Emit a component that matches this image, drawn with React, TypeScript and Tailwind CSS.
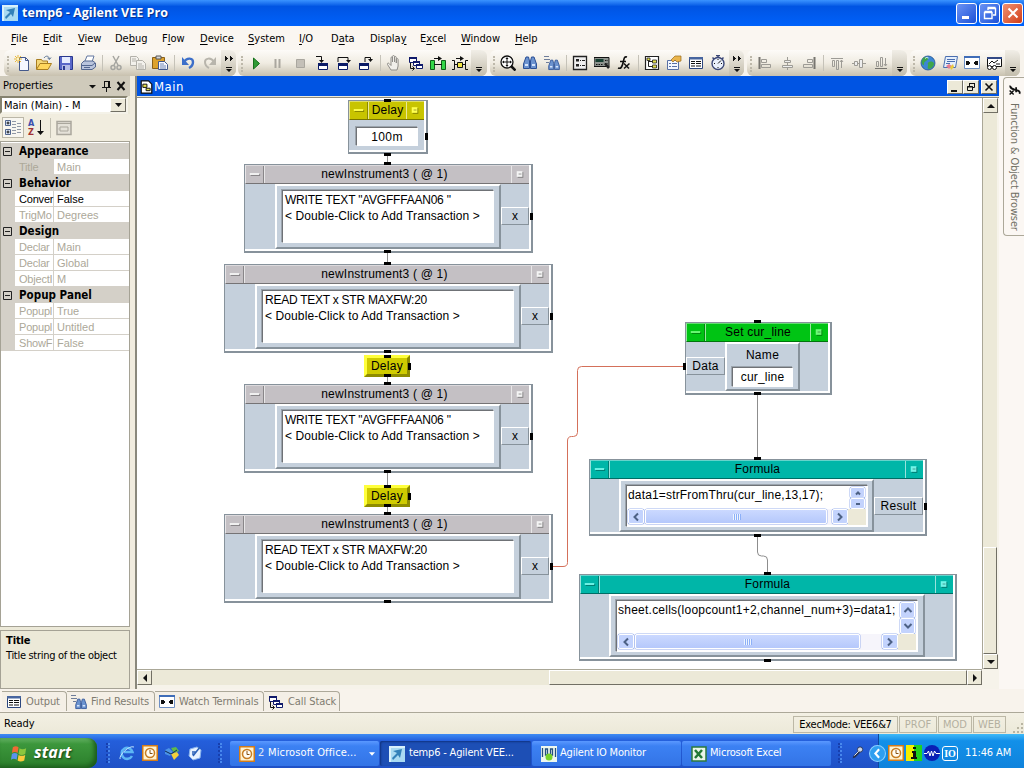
import { ReactNode } from "react";
import clsx from "clsx";

interface IconProps {
  children: ReactNode;
  className?: string;
}

function Icon({ children, className }: IconProps) {
  return (
    <svg viewBox="0 0 16 16" className={clsx("shrink-0", className ?? "w-4 h-4")} fill="none">
      {children}
    </svg>
  );
}

const NewIcon = () => (
  <Icon>
    <path d="M5.500 2.500h6l3 3v10h-9z" fill="#f4f7ff" stroke="#44598c" />
    <path d="M11.500 2.500v3h3" stroke="#44598c" />
    <path d="M4 0v8M0 4h8M1 1l6 6M7 1L1 7" stroke="#e9b93a" />
    <path d="M3 3h2v2H3z" fill="#fff6c0" />
  </Icon>
);
const OpenIcon = () => (
  <Icon>
    <path d="M.5 14V4.500h5l1 1.500h5V9" fill="#f5d878" stroke="#a87d20" />
    <path d="M.5 14.500L4 8.500h11.500L12 14.500z" fill="#ffd65c" stroke="#a87d20" />
    <path d="M8 3c2-3 5-2 5.500 1M11.500 3l2 1.500L15 2.500" stroke="#5d7595" />
  </Icon>
);
const SaveIcon = () => (
  <Icon>
    <path d="M1.500 1.500h13v13h-13z" fill="#5967c8" stroke="#29388f" />
    <path d="M4 2h8v6H4z" fill="#e6ecff" />
    <path d="M4 10h8v5H4z" fill="#b4bce6" />
    <path d="M5 11h2v4H5z" fill="#29388f" />
  </Icon>
);
const PrintIcon = () => (
  <Icon>
    <path d="M5 6l2-5h7l-2 6" fill="#fff" stroke="#6277a0" />
    <path d="M1.500 8.500L4 6h9l2.500 2v4L12 14.500H1.500z" fill="#b9c4dc" stroke="#53668f" />
    <path d="M2 10.500h10l3-2.500M4 12.500h6" stroke="#53668f" />
  </Icon>
);
const CutIcon = () => (
  <Icon>
    <path d="M5 1l5 9M11 1L6 10" stroke="#a5a5a0" strokeWidth="1.500" />
    <circle cx="5" cy="12.500" r="2" stroke="#a5a5a0" strokeWidth="1.500" />
    <circle cx="11" cy="12.500" r="2" stroke="#a5a5a0" strokeWidth="1.500" />
  </Icon>
);
const CopyIcon = () => (
  <Icon>
    <path d="M.5 1.500h6l2 2v7h-8z" fill="#f3f1ec" stroke="#b3b1aa" />
    <path d="M6.500 5.500h6l3 3v6h-9z" fill="#f3f1ec" stroke="#b3b1aa" />
    <path d="M2 4h4M2 6h4M8 9h4M8 11h6M8 13h6" stroke="#b3b1aa" />
  </Icon>
);
const PasteIcon = () => (
  <Icon>
    <path d="M.5 2.500h12v11H.5z" fill="#dda22d" stroke="#8a6119" />
    <path d="M4 1h5v3H4z" fill="#d8d8d8" stroke="#555" />
    <path d="M6.500 6.500h6l3 3v5h-9z" fill="#f6f8ff" stroke="#44598c" />
    <path d="M8 9h4M8 11h6M8 13h6" stroke="#7387b4" />
  </Icon>
);
const UndoIcon = () => (
  <Icon>
    <path d="M4 7c3-5 9-4 9 0 0 3-2 5-4 6" stroke="#3d6fc9" strokeWidth="2.400" />
    <path d="M2 2v8h7z" fill="#3d6fc9" />
  </Icon>
);
const RedoIcon = () => (
  <Icon>
    <path d="M12 7C9 2 3 3 3 7c0 3 2 5 4 6" stroke="#b8b5ac" strokeWidth="2" />
    <path d="M14 2v8H7z" fill="#b8b5ac" />
  </Icon>
);
const PlayIcon = () => (
  <Icon>
    <path d="M5.500 3v11l6-5.500z" fill="#2f9a35" stroke="#16701c" />
  </Icon>
);
const PauseIcon = () => (
  <Icon>
    <path d="M5.500 4v9M9.500 4v9" stroke="#aaa79f" strokeWidth="2" />
  </Icon>
);
const StopIcon = () => (
  <Icon>
    <path d="M4.500 4.500h8v8h-8z" fill="#c4c0b8" stroke="#aaa79f" />
  </Icon>
);
const StepIntoIcon = () => (
  <Icon>
    <path d="M2 1.500h5.500V6" stroke="#111" />
    <path d="M5 5h5L7.500 8z" fill="#111" />
    <path d="M4.500 8.500h9v6h-9z" fill="#fff" stroke="#0b1b66" />
    <path d="M4 8h10v3H4z" fill="#0b1b66" />
  </Icon>
);
const StepOverIcon = () => (
  <Icon>
    <path d="M2 7V2.500h10V6" stroke="#111" />
    <path d="M10 5h5l-2.500 3z" fill="#111" />
    <path d="M2.500 8.500h9v6h-9z" fill="#fff" stroke="#0b1b66" />
    <path d="M2 8h10v3H2z" fill="#0b1b66" />
  </Icon>
);
const StepOutIcon = () => (
  <Icon>
    <path d="M7 7V2.500h5.500V5" stroke="#111" />
    <path d="M10 4h5l-2.500 3z" fill="#111" />
    <path d="M1.500 8.500h9v6h-9z" fill="#fff" stroke="#0b1b66" />
    <path d="M1 8h10v3H1z" fill="#0b1b66" />
  </Icon>
);
const HandIcon = () => (
  <Icon>
    <path
      d="M5 15L1.500 9.500c-.5-1.500 1-2 2-.5L5 10.500V3c0-1.500 1.500-1.500 1.500 0v4V1.500c0-1.300 2-1.300 2 0V7 2.500c0-1.300 1.800-1.300 1.800 0V8 4.500c0-1.300 1.800-1.300 1.800 0V11L11 15z"
      fill="#f1efea"
      stroke="#8f8d88"
    />
  </Icon>
);
const CallStackIcon = () => (
  <Icon>
    <path d="M1.500 2.500h7v5h-7zM5.500 6.500h6v4h-6zM8.500 9.500h6v4h-6z" fill="#fff" stroke="#101a6b" />
    <path d="M1 2h8v2H1zM5 6h7v2H5zM8 9h7v2H8z" fill="#101a6b" />
    <path d="M2.500 8v5.500H6M4.500 11.500l2 2-2 2" stroke="#111" />
  </Icon>
);
const FlowLineIcon = () => (
  <Icon>
    <path d="M.5 5.500h4v9h-4zM11.500 5.500h4v9h-4z" fill="#35d748" stroke="#0f5f18" />
    <path d="M4 9.500h8M4 3.500h7" stroke="#111" />
    <path d="M8 1l4 2.500L8 6z" fill="#111" />
  </Icon>
);
const DataLineIcon = () => (
  <Icon>
    <path d="M0 5.500h2.500v9H0M16 5.500h-2.500v9H16M2.500 9.500h11M4 3.500h7" stroke="#111" />
    <path d="M8 1l4 2.500L8 6z" fill="#111" />
    <path d="M5.500 7.500h5v5h-5z" fill="#f1e544" stroke="#111" />
  </Icon>
);
const ZoomIcon = () => (
  <Icon>
    <circle cx="7" cy="7" r="6" fill="#fff" stroke="#111" strokeWidth="1.300" />
    <path d="M7 3v8M3 7h8" stroke="#111" />
    <path d="M5.500 4L7 2l1.500 2zM5.500 10L7 12l1.500-2zM4 5.500L2 7l2 1.500zM10 5.500L12 7l-2 1.500z" fill="#111" />
    <path d="M11 11l4.500 4.500" stroke="#111" strokeWidth="2.500" />
  </Icon>
);
const Binoculars = () => (
  <>
    <path d="M4 2h2.500l1 4v7.500h-6V9zM12 2H9.500l-1 4v7.500h6V9z" fill="#6c93cf" stroke="#2b4f95" />
    <path d="M3 10h3M10 10h3" stroke="#d6e4fb" strokeWidth="2" />
  </>
);
const FindIcon = () => (
  <Icon>
    <Binoculars />
  </Icon>
);
const FindResultsIcon = () => (
  <Icon>
    <path d="M0 1.500h5M0 4.500h6M2 7.500h3" stroke="#6e7d9a" />
    <g transform="translate(3.500 3.500) scale(.82)">
      <Binoculars />
    </g>
  </Icon>
);
const PropertyListIcon = () => (
  <Icon>
    <path d="M1.500 1.500h13v13h-13z" fill="#efefef" stroke="#222" strokeWidth="1.300" />
    <path d="M4 4h3v2.500H4zM4 9h3v2.500H4z" fill="#222" />
    <path d="M8 5.500h1M10 5.500h3M8 10.500h1M10 10.500h3" stroke="#222" />
  </Icon>
);
const InstrumentIcon = () => (
  <Icon>
    <path d="M0 2.500h15v9H0z" fill="#8e938e" stroke="#111" />
    <path d="M1.500 4h8v3h-8z" fill="#173e31" />
    <path d="M2 9.500h7M11 5.500h3M11 8.500h3" stroke="#111" strokeDasharray="1.500 1" />
    <path d="M10 9l4 5 2-2-4-4z" fill="#222" />
  </Icon>
);
const FxIcon = () => (
  <Icon>
    <path d="M11 2c-3-1-3 2-4 6s-2 6-5 5M4 6.500h6" stroke="#111" strokeWidth="1.700" />
    <path d="M8 8.500l5 5M13.500 8.500L8 13.500" stroke="#111" strokeWidth="1.500" />
  </Icon>
);
const ProgramIcon = () => (
  <Icon>
    <path d="M1.500 1.500h13v13h-13z" fill="#fff" stroke="#222" strokeWidth="1.200" />
    <path d="M4.500 4v7.500H9M4.500 6.500H9" stroke="#222" />
    <path d="M3 3h3v2.500H3zM8.500 5h4v3h-4zM8.500 10h4v3h-4z" fill="#e5e04b" stroke="#222" strokeWidth=".8" />
  </Icon>
);
const PropertiesIcon = () => (
  <Icon>
    <path d="M1.500 5.500h11v9h-11z" fill="#f4f8ff" stroke="#5870a5" />
    <path d="M3 8.500h2M6 8.500h5M3 11.500h2M6 11.500h5" stroke="#5870a5" />
    <path d="M5 5l4-4h6v5l-4 1-2-2-2 2z" fill="#eab54c" stroke="#9a6a1e" strokeWidth=".7" />
  </Icon>
);
const OutputIcon = () => (
  <Icon>
    <path d="M1.500 2.500h13v11h-13z" fill="#fff" stroke="#2c467e" />
    <path d="M1 2h14v2.500H1z" fill="#47659f" />
    <path d="M3 6.500h4M8 6.500h5M3 8.500h4M8 8.500h5M3 11h4M8 11h5" stroke="#111" />
  </Icon>
);
const TimerIcon = () => (
  <Icon>
    <path d="M6 .5h4M8 0v3M2.500 2.500l2 2M13.500 2.500l-2 2" stroke="#3b4777" strokeWidth="1.500" />
    <circle cx="8" cy="8.500" r="6" fill="#eaf0fb" stroke="#3b4777" strokeWidth="1.400" />
    <path d="M8 8.500l3-3M4 8.500h1M11 8.500h1M8 4v1M8 12v1" stroke="#111" />
  </Icon>
);

const AlignLeftIcon = () => (
  <Icon>
    <path d="M2.500 2v12" stroke="#77756f" strokeWidth="2" />
    <path d="M4.500 4.500h5v3h-5zM4.500 9.500h9v3h-9z" stroke="#9d9b95" />
  </Icon>
);
const AlignCenterIcon = () => (
  <Icon>
    <path d="M8.500 2v13" stroke="#9d9b95" />
    <path d="M5.500 5.500h6v2h-6zM3.500 10.500h10v2h-10z" fill="#eee" stroke="#9d9b95" />
  </Icon>
);
const AlignRightIcon = () => (
  <Icon>
    <path d="M13.500 2v12" stroke="#77756f" strokeWidth="2" />
    <path d="M6.500 4.500h5v3h-5zM2.500 9.500h9v3h-9z" stroke="#9d9b95" />
  </Icon>
);
const AlignTopIcon = () => (
  <Icon>
    <path d="M2 3.500h12" stroke="#9d9b95" />
    <path d="M3.500 5.500h2v6h-2zM7.500 5.500h2v9h-2zM12.500 5v8M11 7l1.500-2L14 7" stroke="#9d9b95" />
  </Icon>
);
const AlignMiddleIcon = () => (
  <Icon>
    <path d="M1 8.500h14" stroke="#9d9b95" />
    <path d="M3.500 6.500h3v4h-3zM8.500 4.500h3v8h-3z" fill="#eee" stroke="#9d9b95" />
  </Icon>
);
const AlignBottomIcon = () => (
  <Icon>
    <path d="M2 13.500h12" stroke="#77756f" />
    <path d="M3.500 6.500h2v5h-2zM7.500 2.500h2v9h-2zM12.500 3v8M11 9l1.500 2L14 9" stroke="#9d9b95" />
  </Icon>
);
const GlobeIcon = () => (
  <Icon>
    <circle cx="8" cy="8" r="7" fill="#3c86d4" stroke="#23528e" strokeWidth=".8" />
    <path d="M3 3c3-2 6-1 5 1S4 6 4 9 2 9 1.500 7zM9 7c3-1 5 0 5 2s-3 5-5 5-1-3-1-4-1-2 1-3z" fill="#3fa54a" />
    <path d="M5 3.500c2-2 4-1 3 0" stroke="#d5ecff" />
  </Icon>
);
const BrowserIcon = () => (
  <Icon>
    <path d="M3.500 1.500h12l-2 11h-12z" fill="#e5effc" stroke="#4a6eb0" />
    <path d="M5 4.500h8M5 6.500h8M4 8.500h4" stroke="#4a6eb0" />
    <path d="M4 11l3-2 3 2-3 3z" fill="#e77d92" />
    <path d="M8 12l3-3 1 3-3 3z" fill="#e9c83e" />
  </Icon>
);
const WatchIcon = () => (
  <Icon>
    <path d="M.5 1.500h15v12H.5z" fill="#fff" stroke="#6d8fc4" />
    <path d="M0 1h16v2H0z" fill="#3f6db8" />
    <path d="M2 6h3v1h1v2H5v1H2zM14 6h-3v1h-1v2h1v1h3z" fill="#111" />
  </Icon>
);
const WatchExprIcon = () => (
  <Icon>
    <path d="M1.500 2.500h14v9h-14z" fill="#fff" stroke="#111" />
    <path d="M1 2h15v2H1z" fill="#334a86" />
    <path d="M3 9l3-3 2 2 4-3M10 9h4" stroke="#111" />
    <circle cx="3.500" cy="12.500" r="2" fill="#fff" stroke="#111" />
    <circle cx="8.500" cy="12.500" r="2" fill="#fff" stroke="#111" />
  </Icon>
);

function VeeIcon() {
  return (
    <Icon>
      <path d="M0 0h16v16H0z" fill="#a9daf2" />
      <path d="M0 0h16v2H0zM0 0h2v16H0z" fill="#d9f1fb" />
      <path d="M3 12l5-5-4-2 9-2-2 9-2-3-5 5z" fill="#3381b9" />
    </Icon>
  );
}

function OutlookIcon() {
  return (
    <Icon>
      <path d="M.5.5h15v15H.5z" fill="#fff3cf" stroke="#d37c19" strokeWidth="2" />
      <circle cx="8" cy="8" r="4.500" fill="#fffdf4" stroke="#c77d23" strokeWidth="1.500" />
      <path d="M8 5v3.500h2.500" stroke="#865013" />
    </Icon>
  );
}

const SEPARATOR = null;

function Toolbar({ items, more, className }: { items: (ReactNode | null)[]; more?: boolean; className: string }) {
  return (
    <div
      className={clsx(
        "flex h-[26px] shrink-0 overflow-hidden rounded-md bg-linear-to-b from-[#fdfbf8] via-[#f0ece2] to-[#c8c1af]",
        className,
      )}
    >
      <div className="w-[7px] h-4 mt-[6px] shrink-0">
        <div className="ml-[3px] h-full border-l-2 border-dotted border-[#bdb8aa]" />
      </div>
      {items.map((item, i) =>
        item === SEPARATOR ? (
          <div key={i} className="w-[6px] shrink-0 flex justify-center pt-[5px]">
            <div className="w-px h-4 bg-[#c5c2b8]" />
          </div>
        ) : (
          <div key={i} className="w-[22px] shrink-0 flex justify-center pt-[5px]">
            {item}
          </div>
        ),
      )}
      <div className="flex-1 bg-linear-to-b from-[#f1eee7] to-[#c3bdac] flex justify-center">
        <svg viewBox="0 0 10 26" className="w-[10px] h-[26px]">
          {more && <path d="M1 6h1v1h1v1h1v1H3v1H2v1H1zM6 6h1v1h1v1h1v1H8v1H7v1H6z" fill="#111" />}
          <path d="M2 17h6v1H2zM2 19h6l-3 3z" fill="#111" />
        </svg>
      </div>
    </div>
  );
}

const MENU = [
  { before: "", key: "F", after: "ile", width: "w-8" },
  { before: "", key: "E", after: "dit", width: "w-[35px]" },
  { before: "", key: "V", after: "iew", width: "w-[37px]" },
  { before: "De", key: "b", after: "ug", width: "w-[47px]" },
  { before: "F", key: "l", after: "ow", width: "w-[38px]" },
  { before: "", key: "D", after: "evice", width: "w-12" },
  { before: "", key: "S", after: "ystem", width: "w-[51px]" },
  { before: "", key: "I", after: "/O", width: "w-8" },
  { before: "D", key: "a", after: "ta", width: "w-[39px]" },
  { before: "Displa", key: "y", after: "", width: "w-[50px]" },
  { before: "E", key: "x", after: "cel", width: "w-[41px]" },
  { before: "", key: "W", after: "indow", width: "w-[54px]" },
  { before: "", key: "H", after: "elp", width: "w-10" },
];

function TitleBar() {
  const button = "w-[21px] h-[21px] rounded-[3px] border border-white flex items-center justify-center";
  return (
    <header className="h-[26px] shrink-0 flex items-center pl-[2px] pr-px bg-linear-to-b from-[#3a93ff] via-[#0054e3] via-25% to-[#0062fb]">
      <VeeIcon />
      <h1 className="flex-1 pl-1 pt-px font-['Open_Sans',sans-serif] [font-stretch:normal] font-bold text-[12.5px] tracking-[0.05px] text-white [text-shadow:1px_1px_1px_#0a2c86] whitespace-pre">
        temp6 - Agilent VEE Pro
      </h1>
      <div className="flex gap-[2px]">
        <div className={clsx(button, "bg-linear-to-br from-[#6c93f4] to-[#1b4fd6]")}>
          <Icon>
            <path d="M3 11h7v3H3z" fill="#fff" />
          </Icon>
        </div>
        <div className={clsx(button, "bg-linear-to-br from-[#6c93f4] to-[#1b4fd6]")}>
          <Icon>
            <path d="M6 5V3.500h7.500V10H11M5.500 2.500h8" stroke="#fff" strokeWidth="1.400" />
            <path d="M2.500 7.500h7.500v6H2.500zM2.500 6.500H10" stroke="#fff" strokeWidth="1.400" />
          </Icon>
        </div>
        <div className={clsx(button, "bg-linear-to-br from-[#f0906f] to-[#d03a10]")}>
          <Icon>
            <path d="M3.500 3.500l9 9M12.500 3.500l-9 9" stroke="#fff" strokeWidth="2" />
          </Icon>
        </div>
      </div>
    </header>
  );
}

const PROPERTIES = [
  { group: "Appearance", rows: [["Title", "Main"]] },
  { group: "Behavior", rows: [["Conver", "False"], ["TrigMo", "Degrees"]] },
  { group: "Design", rows: [["Declar", "Main"], ["Declar", "Global"], ["ObjectI", "M"]] },
  { group: "Popup Panel", rows: [["Popupl", "True"], ["Popupl", "Untitled"], ["ShowF", "False"]] },
];

function PropertiesPanel() {
  return (
    <aside className="w-[130px] shrink-0 flex flex-col bg-[#ece9d8]">
      <div className="h-[20px] shrink-0 flex items-center pl-[3px] bg-[#cfcabb]">
        <span className="flex-1">Properties</span>
        <svg viewBox="0 0 44 16" className="w-11 h-4" fill="none">
          <path d="M3 7h7L6.500 10.500z" fill="#111" />
          <path d="M18.500 3v6M23.500 3v6M18 3.500h6M16 9.500h9M20.500 10v4M22.500 3v6" stroke="#111" />
          <path d="M31.500 4l7 8M38.500 4l-7 8" stroke="#111" strokeWidth="2" />
        </svg>
      </div>
      <div className="h-[18px] shrink-0 flex mr-[2px] border-2 border-t-[#85826f] border-l-[#85826f] border-r-[#f4f2e8] border-b-[#f4f2e8] bg-white">
        <span className="flex-1 pl-[2px] leading-[15px] whitespace-pre">Main (Main) - M</span>
        <div className="w-4 bg-[#ece9d8] border border-t-white border-l-white border-r-[#716f64] border-b-[#716f64] flex items-center justify-center">
          <svg viewBox="0 0 7 4" className="w-[7px] h-1">
            <path d="M0 0h7L3.500 4z" fill="#111" />
          </svg>
        </div>
      </div>
      <div className="h-[27px] shrink-0 flex items-center bg-[#f1eddf]">
        <div className="ml-[2px] w-[22px] h-[21px] border border-[#bbb7a8] bg-[#f8f6f0] flex items-center justify-center">
          <svg viewBox="0 0 18 17" className="w-[18px] h-[17px]" fill="none">
            <path d="M1.500 1.500h5v5h-5zM1.500 10.500h5v5h-5z" fill="#dce7fa" stroke="#50658e" />
            <path d="M2.500 4h3M4 2.500v3M2.500 13h3M4 11.500v3" stroke="#111" />
            <path d="M8 2.500h4M8 5.500h4M8 8.500h4M8 11.500h4M8 14.500h4M13 4.500h4M13 7.500h4M13 10.500h4M13 13.500h4" stroke="#9198a6" />
          </svg>
        </div>
        <div className="w-[24px] h-[19px] flex pl-1">
          <div className="w-2 font-bold text-[9px] leading-[9px] pt-px">
            <div className="text-[#3c4fae]">A</div>
            <div className="text-[#a03232]">Z</div>
          </div>
          <svg viewBox="0 0 7 17" className="w-[7px] h-[17px] ml-px mt-px">
            <path d="M3 1h1v11h3l-3.500 4L0 12h3z" fill="#111" />
          </svg>
        </div>
        <div className="w-px h-5 ml-[2px] mr-[5px] bg-[#c5c2b4]" />
        <Icon className="w-4 h-4">
          <path d="M1 1.500h14v13H1z" fill="#e4e1d8" stroke="#aaa79d" strokeWidth="1.500" />
          <path d="M1 3.500h14M4 7h8v4H4zM2.500 9h1" stroke="#aaa79d" />
        </Icon>
      </div>
      <div className="h-[486px] shrink-0 border border-[#a5a295] bg-white pt-px">
        {PROPERTIES.map(({ group, rows }) => (
          <section key={group} className="bg-[#d4d0c8]">
            <h2 className="h-4 flex items-center font-bold text-[11.500px] tracking-[0.02px]">
              <svg viewBox="0 0 9 9" className="w-[9px] h-[9px] ml-[2px] mr-[7px]" fill="none">
                <path d="M.5.5h8v8h-8zM2 4.500h5" stroke="#222" />
              </svg>
              <span className="pt-[2px]">{group}</span>
            </h2>
            {rows.map(([name, value], i) => (
              <div
                key={i}
                className={clsx(
                  "h-4 ml-[14px] flex border-b border-[#d4d0c8] bg-white leading-[16px] font-['Liberation_Sans',sans-serif] text-[11px]",
                  name === "Conver" ? "text-black" : "text-[#aca899]",
                )}
              >
                <div
                  className={clsx(
                    "w-[39px] shrink-0 pl-1 whitespace-nowrap tracking-[-0.2px] border-r border-[#d4d0c8]",
                    name === "Title" && "bg-[#d4d0c8]",
                  )}
                >
                  {name}
                </div>
                <div className="pl-[3px]">{value}</div>
              </div>
            ))}
          </section>
        ))}
      </div>
      <div className="mt-[3px] h-[59px] border border-[#a5a295] px-[5px] pt-[2px] leading-[15px]">
        <div className="font-bold tracking-[-0.1px]">Title</div>
        <div className="whitespace-nowrap tracking-[-0.3px]">Title string of the object</div>
      </div>
    </aside>
  );
}

interface NodeProps {
  title: string;
  className: string;
  bar?: string;
  ink?: string;
  children: ReactNode;
}

// Open view of a VEE object: coloured title strip above a row of terminals and body.
function ObjectView({ title, className, bar = "bg-[#c4c0c4]", ink = "#f4f4f4", children }: NodeProps) {
  return (
    <div className={clsx("absolute flex flex-col border border-[#87929b] border-r-2 border-b-2 bg-white", className)}>
      <div
        className={clsx("h-[19px] mr-[2px] shrink-0 flex border-t border-l border-b border-t-white/40 border-l-white/60 border-b-black/40", bar)}
      >
        <svg viewBox="0 0 18 17" className="w-[18px] h-[17px] shrink-0 border-r border-black/30">
          <path d="M5 8h10v2H5z" fill="#0005" />
          <path d="M4 7h10v2H4z" fill={ink} />
        </svg>
        <div className="flex-1 border-l border-white/60 text-center text-[12px] leading-[16px] tracking-[0.2px] whitespace-pre">{title}</div>
        <svg viewBox="0 0 18 17" className="w-[18px] h-[17px] shrink-0 border-l border-white/60">
          <path d="M6 6h6v6H6z" fill="#0005" />
          <path d="M5 5h6v6H5z" fill={ink} />
          <path d="M7 7h3v2H7z" fill="#0003" />
        </svg>
      </div>
      <div className="flex-1 min-h-0 flex mr-[2px] mb-[2px] bg-[#c5d0dc]">{children}</div>
    </div>
  );
}

function Body({ className, children }: { className?: string; children: ReactNode }) {
  return (
    <div className={clsx("border-2 border-t-white border-l-white border-r-[#87929b] border-b-[#87929b] bg-[#c5d0dc] flex flex-col", className)}>
      {children}
    </div>
  );
}

const FIELD = "border border-t-[#6f7276] border-l-[#6f7276] border-r-white border-b-white p-px bg-white shadow-[-1px_-1px_0_#9ba4ad]";

function Terminal({ className, children }: { className: string; children: ReactNode }) {
  return (
    <div
      className={clsx(
        "h-[18px] shrink-0 border border-t-white border-l-white border-r-[#87929b] border-b-[#87929b] text-center text-[12px] leading-[16px]",
        className,
      )}
    >
      {children}
    </div>
  );
}

function Instrument({ className, transaction, read }: { className: string; transaction: string; read?: boolean }) {
  return (
    <ObjectView title="newInstrument3 ( @ 1)  " className={clsx("h-[89px]", read ? "w-[329px]" : "w-[289px]", className)}>
      <div className="w-[30px] shrink-0" />
      <Body className="flex-1 p-[5px] pt-1 pb-1">
        <div className={clsx(FIELD, "flex-1 pl-[2px] text-[12px] leading-4 whitespace-pre")}>
          <div className={read ? "tracking-[-0.25px]" : "tracking-[-0.22px]"}>{transaction}</div>
          <div className="tracking-[0.1px]">&lt; Double-Click to Add Transaction &gt;</div>
        </div>
      </Body>
      <Terminal className="w-7 mt-[23px]">x</Terminal>
    </ObjectView>
  );
}

function DelayIcon({ className }: { className: string }) {
  return (
    <div
      className={clsx(
        "absolute left-[227px] w-[46px] h-[22px] border-[3px] border-t-[#ffff3c] border-l-[#ffff3c] border-r-[#8e8c00] border-b-[#8e8c00] bg-[#cfcb00] text-center text-[12px] leading-[16px] tracking-[0.3px]",
        className,
      )}
    >
      Delay
    </div>
  );
}

function LunaButton({ path, className }: { path: string; className: string }) {
  return (
    <div className={clsx("shrink-0 rounded-[2px] border border-white bg-[#c3d3fd] shadow-[0_0_0_0.5px_#9db4ee] flex items-center justify-center", className)}>
      <svg viewBox="0 0 10 10" className="w-[10px] h-[10px]" fill="none">
        <path d={path} stroke="#4d6185" strokeWidth="2" />
      </svg>
    </div>
  );
}

function FormulaField({ text, thumb, small }: { text: string; thumb: string; small?: boolean }) {
  return (
    <div className={clsx(FIELD, "flex-1 min-h-0 flex flex-col")}>
      <div className="flex-1 flex min-h-0 justify-between">
        <div
          className={clsx(
            "text-[12px] leading-[16px] whitespace-pre",
            small ? "tracking-[0.16px]" : "tracking-[0.24px]",
          )}
        >
          {text}
        </div>
        <div className="flex flex-col shrink-0 pr-px">
          {small ? (
            <>
              <LunaButton className="w-[15px] h-[11px]" path="M3 6.500l2-2 2 2" />
              <LunaButton className="w-[15px] h-[11px]" path="M3 5h4" />
            </>
          ) : (
            <>
              <LunaButton className="w-[15px] h-4" path="M1.500 7L5 3.500 8.500 7" />
              <LunaButton className="w-[15px] h-4" path="M1.500 3L5 6.500 8.500 3" />
            </>
          )}
        </div>
      </div>
      <div className="h-4 shrink-0 flex bg-[#f6f5fb]">
        <LunaButton className="w-4 h-[15px]" path="M7 1.500L3.500 5 7 8.500" />
        <div
          className={clsx(
            "h-[15px] ml-px rounded-[2px] border border-white bg-linear-to-b from-[#cbd9ff] to-[#b5c8fb] shadow-[0_0_0_0.5px_#9db4ee] flex items-center justify-center gap-px",
            thumb,
          )}
        >
          {[0, 1, 2, 3].map((n) => (
            <div key={n} className="w-px h-[6px] bg-[#eef4fe] shadow-[1px_0_0_#8cb0f8]" />
          ))}
        </div>
        <div className="flex-1" />
        <LunaButton className="w-4 h-[15px]" path="M3 1.500L6.500 5 3 8.500" />
        <div className="w-[18px] bg-[#ece9d8]" />
      </div>
    </div>
  );
}

// Sequence pins sit on the top and bottom edges, data pins on the sides.
const SEQUENCE_PINS = [
  [387, 100], [387, 154], [387, 163], [387, 251], [387, 263], [387, 351], [387, 356], [387, 375],
  [387, 383], [387, 471], [387, 486], [387, 505], [387, 513], [387, 601],
  [757, 321], [757, 393], [757, 458], [757, 535], [767, 573], [767, 660],
];
const DATA_PINS = [
  [426, 136], [531, 216], [551, 316], [409, 366], [531, 436], [409, 496], [551, 566], [684, 366], [925, 506],
];

function Wires() {
  return (
    <svg viewBox="137 98 845 571" className="absolute left-0 top-0 w-[845px] h-[571px]" fill="none">
      <path
        d="M387.500 155v8M387.500 252v11M387.500 376v7M387.500 472v14M387.500 506v7M757.500 394v64M757.500 536v16q0 4 4 4h2q4 0 4 4v13"
        stroke="#8d8d8d"
      />
      <path d="M552 566.500h11q4.500 0 4.500-4V441q0-4.500 4-4.500h2q4 0 4-4V370.500q0-4 4-4h102.500" stroke="#d4705a" />
      {SEQUENCE_PINS.map(([x, y]) => (
        <rect key={`${x}-${y}`} x={x - 3} y={y - 1} width="7" height="3" fill="#000" />
      ))}
      {DATA_PINS.map(([x, y]) => (
        <rect key={`${x}-${y}`} x={x - 1} y={y - 3} width="3" height="7" fill="#000" />
      ))}
    </svg>
  );
}

function Workspace() {
  return (
    <div className="relative flex-1 overflow-hidden bg-white font-['Liberation_Sans',sans-serif]">
      <ObjectView title="Delay" bar="bg-[#c8c400]" ink="#ffff50" className="left-[211px] top-[2px] w-[80px] h-[54px]">
        <div className="flex-1 p-[6px] pl-[7px] pt-[7px]">
          <div className={clsx(FIELD, "h-[19px] text-center text-[12px] leading-[16px] tracking-[0.4px]")}>100m</div>
        </div>
      </ObjectView>
      <Instrument className="left-[107px] top-[66px]" transaction={'WRITE TEXT "AVGFFFAAN06 "'} />
      <Instrument className="left-[87px] top-[166px]" transaction="READ TEXT x STR MAXFW:20" read />
      <DelayIcon className="top-[257px]" />
      <Instrument className="left-[107px] top-[286px]" transaction={'WRITE TEXT "AVGFFFAAN06 "'} />
      <DelayIcon className="top-[387px]" />
      <Instrument className="left-[87px] top-[416px]" transaction="READ TEXT x STR MAXFW:20" read />

      <ObjectView title="Set cur_line" bar="bg-[#00c414]" ink="#6dfa78" className="left-[548px] top-[224px] w-[147px] h-[73px]">
        <Terminal className="w-[39px] mt-[15px] tracking-[0.3px]">Data</Terminal>
        <Body className="w-[75px] px-[5px]">
          <div className="h-[23px] text-center text-[12px] leading-[22px] tracking-[0.3px]">Name</div>
          <div className={clsx(FIELD, "h-[20px] text-center text-[12px] leading-[16px] tracking-[0.2px]")}>cur_line</div>
        </Body>
      </ObjectView>

      <ObjectView title="Formula" bar="bg-[#00b6a8]" ink="#72f4e8" className="left-[452px] top-[361px] w-[338px] h-[77px]">
        <div className="w-[29px] shrink-0" />
        <Body className="flex-1 pl-[5px] pr-1 pt-1 pb-[3px]">
          <FormulaField text="data1=strFromThru(cur_line,13,17);" thumb="w-[182px]" small />
        </Body>
        <Terminal className="w-[49px] mt-[18px] tracking-[0.3px]">Result</Terminal>
      </ObjectView>

      <ObjectView title="Formula" bar="bg-[#00b6a8]" ink="#72f4e8" className="left-[442px] top-[476px] w-[378px] h-[87px]">
        <div className="w-[29px] shrink-0" />
        <Body className="flex-1 px-[5px] pt-1 pb-[3px]">
          <FormulaField text="sheet.cells(loopcount1+2,channel_num+3)=data1;" thumb="w-[225px]" />
        </Body>
        <div className="w-[28px] shrink-0" />
      </ObjectView>
      <Wires />
    </div>
  );
}

const RAISED = "border border-t-white border-l-white border-r-[#716f64] border-b-[#716f64] bg-[#ece9d8]";

function ScrollArrow({ path }: { path: string }) {
  return (
    <div className={clsx(RAISED, "w-[15px] h-[15px] shrink-0 flex items-center justify-center")}>
      <svg viewBox="0 0 8 8" className="w-2 h-2">
        <path d={path} fill="#111" />
      </svg>
    </div>
  );
}

function MainWindow() {
  const button = clsx(RAISED, "w-4 h-[14px] flex items-center justify-center");
  return (
    <main className="w-[864px] shrink-0 flex flex-col border-l-2 border-[#8a887c]">
      <div className="h-[20px] shrink-0 flex items-center pl-[3px] pr-[2px] pt-px bg-[#0054e3]">
        <Icon className="w-[13px] h-[14px]">
          <path d="M1.500.5h9l4 4v11h-13z" fill="#fff" stroke="#111" strokeWidth="1.500" />
          <path d="M3.500 4.500h5v4h-5zM7.500 9.500h5v3h-5z" fill="#e5e04b" stroke="#111" strokeWidth="1.200" />
        </Icon>
        <span className="flex-1 pl-px text-white text-[13px] tracking-[0.5px]">Main</span>
        <div className={button}>
          <svg viewBox="0 0 10 10" className="w-[10px] h-[10px]">
            <path d="M1 8h6v2H1z" fill="#111" />
          </svg>
        </div>
        <div className={clsx(button, "mr-[2px]")}>
          <svg viewBox="0 0 10 10" className="w-[10px] h-[10px]" fill="none">
            <path d="M3.500 4V1.500h5v4H7M3 1.500h6M1.500 4.500h5v4h-5zM1 5h6" stroke="#111" />
          </svg>
        </div>
        <div className={button}>
          <svg viewBox="0 0 10 10" className="w-[10px] h-[10px]">
            <path d="M1.500 1.500l7 7M8.500 1.500l-7 7" stroke="#111" strokeWidth="1.600" />
          </svg>
        </div>
      </div>
      <div className="h-[2px] shrink-0 bg-[#8f8c7e] border-t border-[#ece9d8]" />
      <div className="h-[571px] shrink-0 flex">
        <Workspace />
        <div className="w-[15px] mr-[2px] flex flex-col bg-[#ece9d8] border-l border-[#aaa797]">
          <ScrollArrow path="M0 6h8L4 2z" />
          <div className="flex-1" />
          <div className={clsx(RAISED, "h-[107px]")} />
          <ScrollArrow path="M0 2h8L4 6z" />
        </div>
      </div>
      <div className="h-[16px] shrink-0 mr-[17px] flex bg-[#ece9d8] border-t border-[#aaa797]">
        <ScrollArrow path="M6 0v8L2 4z" />
        <div className="flex-1" />
        <div className={clsx(RAISED, "w-[418px]")} />
        <ScrollArrow path="M2 0v8l4-4z" />
      </div>
      <div className="flex-1 bg-[#f6f3ea]" />
    </main>
  );
}

function BottomTab({ icon, label, className }: { icon: ReactNode; label: string; className: string }) {
  return (
    <div className={clsx("flex items-center gap-[4px] pl-1 border border-l-0 border-b-0 border-[#aca899] rounded-tr bg-[#f4efe6] text-[#7f7b70]", className)}>
      {icon}
      <span className="pt-px whitespace-nowrap tracking-[-0.08px]">{label}</span>
    </div>
  );
}

function StatusCell({ className, children }: { className: string; children: ReactNode }) {
  return <div className={clsx("h-[17px] border border-[#bcb8a6] text-center leading-[16px] whitespace-nowrap", className)}>{children}</div>;
}

function TaskButton({ icon, className, children }: { icon: ReactNode; className?: string; children: ReactNode }) {
  return (
    <div
      className={clsx(
        "h-[25px] shrink-0 rounded-[2px] flex items-center pl-[9px] gap-[3px] whitespace-pre text-white tracking-[-0.2px]",
        className ?? "w-[149px] bg-linear-to-b from-[#5a98ff] via-[#3c81f3] via-20% to-[#3374e6]",
      )}
    >
      {icon}
      {children}
    </div>
  );
}

function Grip({ className }: { className: string }) {
  return <div className={clsx("h-5 w-1 shrink-0 border-l-2 border-r-2 border-dotted border-l-[#173fae] border-r-[#4888ee]", className)} />;
}

function Taskbar() {
  return (
    <footer className="h-[34px] shrink-0 flex bg-linear-to-b from-[#3f8cf3] via-[#245edb] via-20% to-[#1f51c6] text-white">
      <div className="mt-[4px] w-[97px] shrink-0 flex items-center pl-[10px] rounded-r-[9px] bg-linear-to-b from-[#63b263] via-[#3c973c] via-20% to-[#2b7e2b] shadow-[inset_-3px_-2px_4px_#1c5c1c]">
        <svg viewBox="0 0 20 18" className="w-[19px] h-[18px]">
          <path d="M3 3q3-2 6 0L8 9q-3-2-6 0z" fill="#ef6a35" />
          <path d="M10 4q3 2 7 0l-1 6q-4 2-7 0z" fill="#8cc63e" />
          <path d="M2 10q3-2 6 0l-1 6q-3-2-6 0z" fill="#5a93ee" />
          <path d="M9 11q3 2 7 0l-1 6q-4 2-7 0z" fill="#fcc93c" />
        </svg>
        <span className="pl-[5px] pb-[2px] font-['Open_Sans',sans-serif] [font-stretch:normal] italic font-bold text-[16px] tracking-[0.1px] [text-shadow:1px_1px_2px_#143f14]">
          start
        </span>
      </div>
      <div className="flex items-center pt-[3px] w-[133px] shrink-0">
        <Grip className="ml-[9px] mr-[9px]" />
        <Icon>
          <path d="M13 11a5.500 5.500 0 1 1 .5-4H5" stroke="#5db6f5" strokeWidth="2.500" />
          <path d="M1 14C0 10 10 0 15 2" stroke="#bfe5ff" />
        </Icon>
        <div className="w-[7px]" />
        <OutlookIcon />
        <div className="w-[6px]" />
        <Icon>
          <path d="M1 5l4-2 4 4-3 4-5-2z" fill="#4b94e8" />
          <path d="M7 3l5-1 3 4-5 2z" fill="#5fba4b" />
          <path d="M7 9l6-2 2 3-5 5z" fill="#f0d03c" />
          <path d="M1 6l6 3 6-4" stroke="#0f2b52" />
        </Icon>
        <div className="w-[7px]" />
        <Icon>
          <path d="M3 4l7-2 4 3-1 8-7 2-4-4z" fill="#e8f2ff" stroke="#88b3ee" />
          <path d="M6 11l7-9M5 7h4M5 9h2" stroke="#2b61b7" strokeWidth="1.500" />
        </Icon>
        <Grip className="ml-[15px]" />
      </div>
      <div className="flex items-start gap-px pt-[7px] flex-1">
        <TaskButton icon={<OutlookIcon />}>
          <span className="text-[#dfe6f5]">2</span>
          <span className="pl-px tracking-[0.1px]">Microsoft Office...</span>
          <svg viewBox="0 0 7 4" className="w-[6px] h-1 ml-[9px]">
            <path d="M0 0h7L3.500 4z" fill="#fff" />
          </svg>
        </TaskButton>
        <TaskButton className="w-[151px] bg-[#1d4fb5] shadow-[inset_1px_1px_2px_#0f3380]" icon={<VeeIcon />}>
          <span className="pl-px tracking-[-0.18px]">temp6 - Agilent VEE...</span>
        </TaskButton>
        <TaskButton
          icon={
            <Icon>
              <path d="M0 0h16v16H0z" fill="#eef7ee" />
              <path d="M1.500 2v9M4.500 3h2v6h-2zM9.500 3h2v6h-2zM14.500 2v9" stroke="#245080" strokeWidth="1.300" />
              <circle cx="8" cy="11" r="3.500" fill="#77d32c" />
            </Icon>
          }
        >
          <span>Agilent IO Monitor</span>
        </TaskButton>
        <TaskButton
          icon={
            <Icon>
              <path d="M1 1h14v14H1z" fill="#e9f5e9" stroke="#2c7a3c" strokeWidth="1.500" />
              <path d="M4 4l7 8M11 4l-7 8" stroke="#237a35" strokeWidth="2.500" />
            </Icon>
          }
        >
          <span>Microsoft Excel</span>
        </TaskButton>
      </div>
      <div className="w-[47px] shrink-0 flex items-center pt-[3px]">
        <Grip className="ml-[7px] mr-[8px]" />
        <Icon className="w-[14px] h-4">
          <path d="M3 14l1-3 6-6 2 2-6 6z" fill="#26314f" />
          <circle cx="11.500" cy="4" r="3" fill="#cfd7e6" stroke="#26314f" />
          <path d="M5 11l5-5" stroke="#fff" />
        </Icon>
      </div>
      <div className="w-[146px] shrink-0 flex items-center pt-[4px] bg-linear-to-b from-[#3fbaf8] via-[#1290e9] via-20% to-[#0f83dc] border-l border-[#0c4a9e]">
        <Icon className="-ml-[10px] w-[17px] h-[17px]">
          <circle cx="8" cy="8" r="7.500" fill="#2f9ff0" stroke="#8bd0ff" />
          <path d="M9.500 4L6 8l3.500 4" stroke="#fff" strokeWidth="2" />
        </Icon>
        <div className="w-[2px]" />
        <OutlookIcon />
        <svg viewBox="0 0 16 16" className="w-[16px] h-4 ml-[2px] shrink-0">
          <path d="M0 0h8v16H0z" fill="#f4f000" />
          <path d="M8 0h8v16H8z" fill="#1fd31f" />
          <path d="M7 2h3v2H7zM6 6h4v6h1v2H5v-2h2V8H6z" fill="#111" />
        </svg>
        <svg viewBox="0 0 16 16" className="w-4 h-4 ml-[2px] shrink-0" fill="none">
          <circle cx="8" cy="8" r="8" fill="#0a1fb5" />
          <path d="M0 8.500h3L4.500 6 6 11l1.500-5L9 11l1.500-5L12 8.500h4" stroke="#fff" />
        </svg>
        <div className="ml-[2px] w-4 h-[15px] shrink-0 rounded-[3px] border border-white flex items-center justify-center font-['Liberation_Serif',serif] font-bold text-[10px] leading-[11px]">
          IO
        </div>
        <span className="ml-[7px] whitespace-nowrap tracking-[-0.1px]">11:46 AM</span>
      </div>
    </footer>
  );
}

export default function App() {
  return (
    <div className="w-[1024px] h-[768px] overflow-hidden flex flex-col bg-[#f6f3ea] text-black font-['DejaVu_Sans_Condensed','DejaVu_Sans',sans-serif] [font-stretch:condensed] text-[11px]">
      <TitleBar />
      <nav className="h-[24px] shrink-0 flex items-center pl-[11px] pt-[2px] bg-[#faf6f1]">
        {MENU.map(({ before, key, after, width }) => (
          <span key={before + key + after} className={clsx("shrink-0 whitespace-nowrap", width)}>
            {before}
            <span className="underline underline-offset-2">{key}</span>
            {after}
          </span>
        ))}
      </nav>
      <div className="h-[26px] shrink-0 flex pl-1 bg-[#f7f3ec]">
        <Toolbar
          className="w-[232px] mr-[2px]"
          more
          items={[<NewIcon />, <OpenIcon />, <SaveIcon />, <PrintIcon />, SEPARATOR, <CutIcon />, <CopyIcon />, <PasteIcon />, SEPARATOR, <UndoIcon />, <RedoIcon />]}
        />
        <Toolbar
          className="w-[249px] mr-[3px]"
          items={[<PlayIcon />, <PauseIcon />, <StopIcon />, <StepIntoIcon />, <StepOverIcon />, <StepOutIcon />, SEPARATOR, <HandIcon />, <CallStackIcon />, <FlowLineIcon />, <DataLineIcon />]}
        />
        <Toolbar
          className="w-[254px] mr-[3px]"
          more
          items={[<ZoomIcon />, <FindIcon />, <FindResultsIcon />, SEPARATOR, <PropertyListIcon />, <InstrumentIcon />, <FxIcon />, SEPARATOR, <ProgramIcon />, <PropertiesIcon />, <OutputIcon />, <TimerIcon />]}
        />
        <Toolbar
          className="w-[160px] mr-[3px]"
          items={[<AlignLeftIcon />, <AlignCenterIcon />, <AlignRightIcon />, SEPARATOR, <AlignTopIcon />, <AlignMiddleIcon />, <AlignBottomIcon />]}
        />
        <Toolbar className="w-[110px]" items={[<GlobeIcon />, <BrowserIcon />, <WatchIcon />, <WatchExprIcon />]} />
      </div>
      <div className="h-[613px] shrink-0 flex">
        <PropertiesPanel />
        <div className="w-[5px] shrink-0 bg-[#f1ecdf]" />
        <MainWindow />
        <div className="flex-1 pl-1 pt-px bg-[#fbf7f3]">
          <div className="h-[159px] rounded-l border border-r-0 border-[#aca899] pt-[6px] flex flex-col items-center text-[#716f64]">
            <Icon className="w-[13px] h-[13px] shrink-0 rotate-90">
              <path d="M12 2C8 0 8 5 7 8s-2 6-5 5M4 6h6" stroke="#111" strokeWidth="2.200" />
              <path d="M8 9l5 5M13 9l-5 5" stroke="#111" strokeWidth="1.800" />
            </Icon>
            <span className="mt-[6px] [writing-mode:vertical-rl] whitespace-nowrap tracking-[-0.15px]">
              Function &amp; Object Browser
            </span>
          </div>
        </div>
      </div>
      <div className="h-[24px] shrink-0 flex pl-[2px] pt-[2px] pb-px border-b border-[#aca899] bg-[#f8f3ec]">
        <BottomTab className="w-[65px] border-l" icon={<OutputIcon />} label="Output" />
        <BottomTab className="w-[88px]" icon={<FindResultsIcon />} label="Find Results" />
        <BottomTab className="w-[109px]" icon={<WatchIcon />} label="Watch Terminals" />
        <BottomTab className="w-[76px]" icon={<CallStackIcon />} label="Call Stack" />
      </div>
      <div className="h-[21px] shrink-0 flex items-center pl-1 pt-px bg-linear-to-b from-[#f3f0e4] to-[#ece9d8]">
        <span className="flex-1 pt-px">Ready</span>
        <StatusCell className="w-[105px] mr-[1px] tracking-[-0.25px]">ExecMode: VEE6&amp;7</StatusCell>
        <StatusCell className="w-[38px] mr-[1px] text-[#b4b0a0]">PROF</StatusCell>
        <StatusCell className="w-[34px] mr-[1px] text-[#b4b0a0]">MOD</StatusCell>
        <StatusCell className="w-[33px] mr-[6px] text-[#b4b0a0]">WEB</StatusCell>
        <svg viewBox="0 0 12 12" className="w-3 h-3 self-end">
          <path d="M9 1h2v2H9zM9 5h2v2H9zM9 9h2v2H9zM5 5h2v2H5zM5 9h2v2H5zM1 9h2v2H1z" fill="#b9b5a3" />
        </svg>
      </div>
      <Taskbar />
    </div>
  );
}
